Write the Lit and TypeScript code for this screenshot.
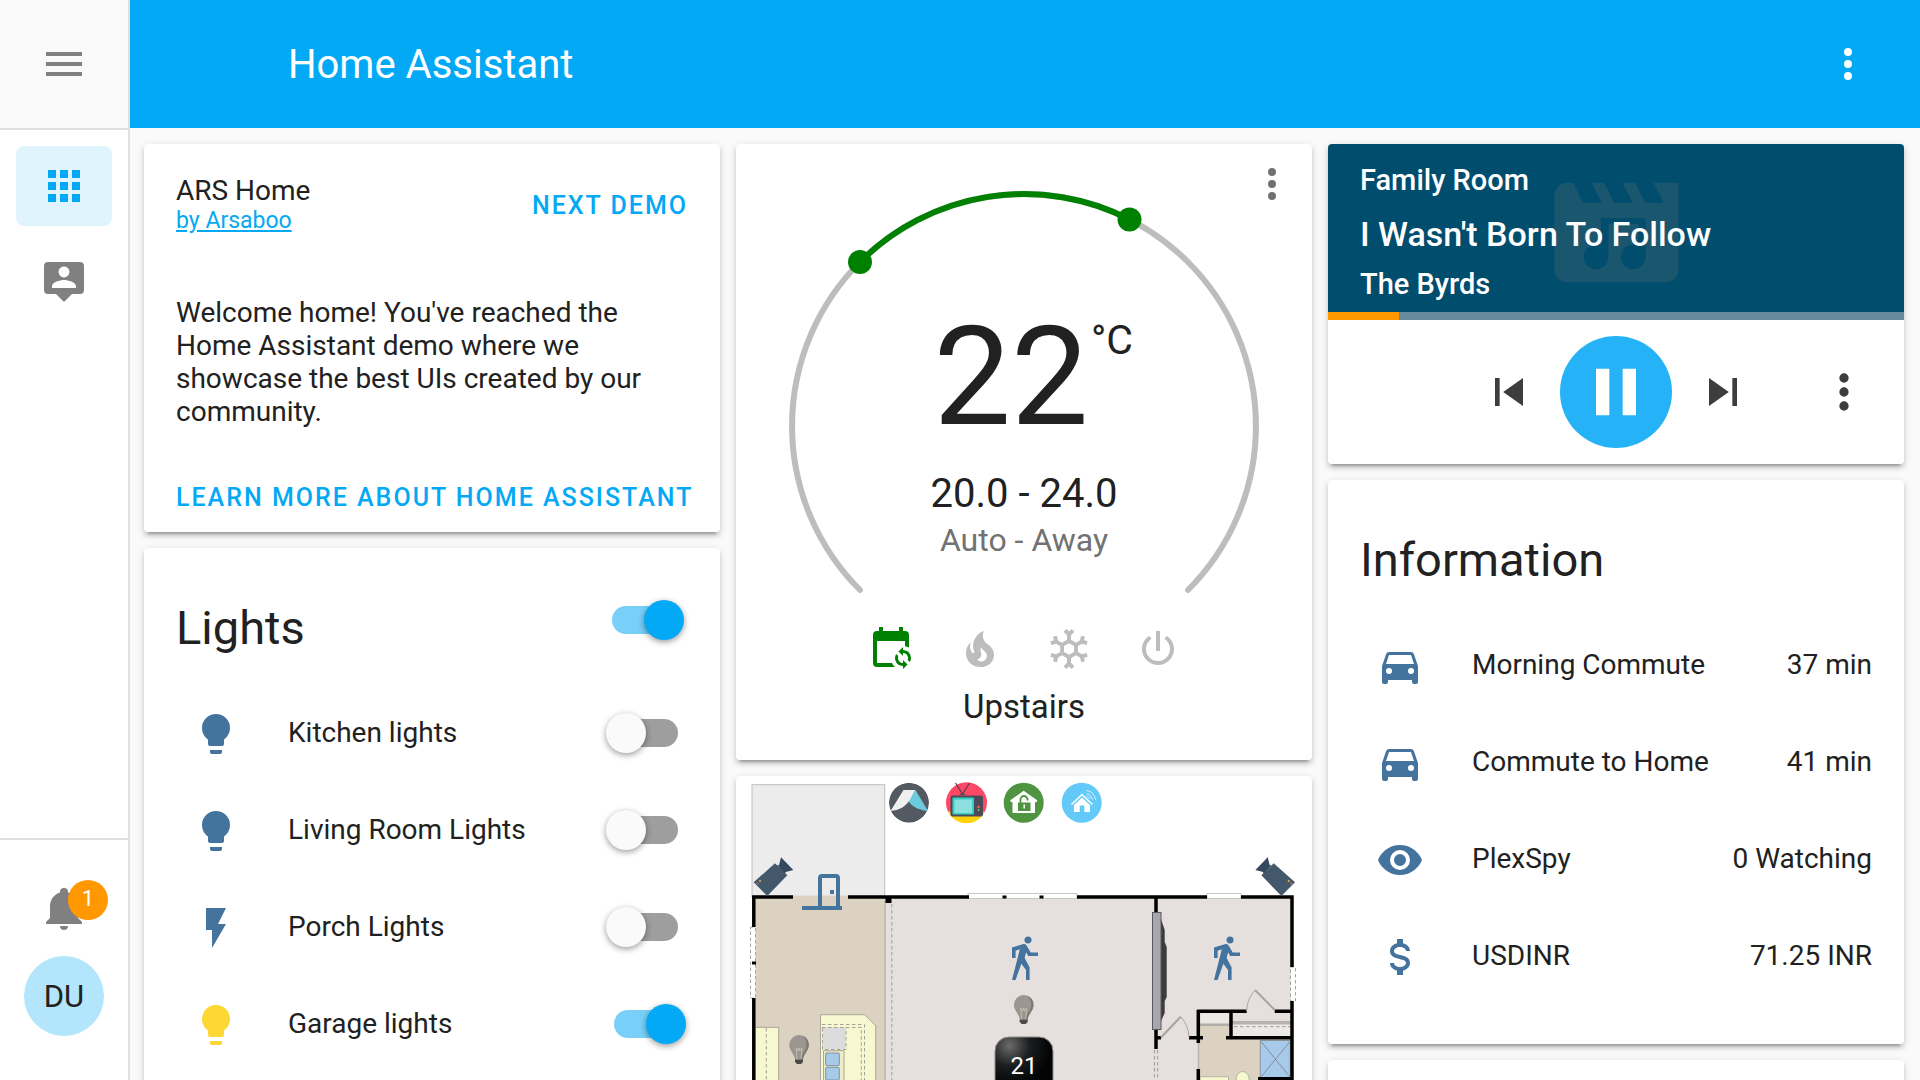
import { LitElement, html, css, svg } from "lit";
import { customElement, property } from "lit/decorators.js";

const ICONS: Record<string, string> = {
  menu: "M3,6H21V8H3V6M3,11H21V13H3V11M3,16H21V18H3V16Z",
  apps: "M16,20H20V16H16M16,14H20V10H16M10,8H14V4H10M16,8H20V4H16M10,14H14V10H10M4,14H8V10H4M4,20H8V16H4M10,20H14V16H10M4,8H8V4H4V8Z",
  account:
    "M20,2H4A2,2 0 0,0 2,4V16A2,2 0 0,0 4,18H8L12,22L16,18H20A2,2 0 0,0 22,16V4A2,2 0 0,0 20,2M12,4.3C13.5,4.3 14.7,5.5 14.7,7C14.7,8.5 13.5,9.7 12,9.7C10.5,9.7 9.3,8.5 9.3,7C9.3,5.5 10.5,4.3 12,4.3M18,15H6V14.1C6,12.1 10,11 12,11C14,11 18,12.1 18,14.1V15Z",
  bell: "M21,19V20H3V19L5,17V11C5,7.9 7.03,5.17 10,4.29C10,4.19 10,4.1 10,4A2,2 0 0,1 12,2A2,2 0 0,1 14,4C14,4.1 14,4.19 14,4.29C16.97,5.17 19,7.9 19,11V17L21,19M14,21A2,2 0 0,1 12,23A2,2 0 0,1 10,21",
  dots: "M12,16A2,2 0 0,1 14,18A2,2 0 0,1 12,20A2,2 0 0,1 10,18A2,2 0 0,1 12,16M12,10A2,2 0 0,1 14,12A2,2 0 0,1 12,14A2,2 0 0,1 10,12A2,2 0 0,1 12,10M12,4A2,2 0 0,1 14,6A2,2 0 0,1 12,8A2,2 0 0,1 10,6A2,2 0 0,1 12,4Z",
  bulb: "M12,2A7,7 0 0,0 5,9C5,11.38 6.19,13.47 8,14.74V17A1,1 0 0,0 9,18H15A1,1 0 0,0 16,17V14.74C17.81,13.47 19,11.38 19,9A7,7 0 0,0 12,2M9,21A1,1 0 0,0 10,22H14A1,1 0 0,0 15,21V20H9V21Z",
  flash: "M7,2V13H10V22L17,10H13L17,2H7Z",
  car: "M5,11L6.5,6.5H17.5L19,11M17.5,16A1.5,1.5 0 0,1 16,14.5A1.5,1.5 0 0,1 17.5,13A1.5,1.5 0 0,1 19,14.5A1.5,1.5 0 0,1 17.5,16M6.5,16A1.5,1.5 0 0,1 5,14.5A1.5,1.5 0 0,1 6.5,13A1.5,1.5 0 0,1 8,14.5A1.5,1.5 0 0,1 6.5,16M18.92,6C18.72,5.42 18.16,5 17.5,5H6.5C5.84,5 5.28,5.42 5.08,6L3,12V20A1,1 0 0,0 4,21H5A1,1 0 0,0 6,20V19H18V20A1,1 0 0,0 19,21H20A1,1 0 0,0 21,20V12L18.92,6Z",
  eye: "M12,9A3,3 0 0,0 9,12A3,3 0 0,0 12,15A3,3 0 0,0 15,12A3,3 0 0,0 12,9M12,17A5,5 0 0,1 7,12A5,5 0 0,1 12,7A5,5 0 0,1 17,12A5,5 0 0,1 12,17M12,4.5C7,4.5 2.73,7.61 1,12C2.73,16.39 7,19.5 12,19.5C17,19.5 21.27,16.39 23,12C21.27,7.61 17,4.5 12,4.5Z",
  dollar:
    "M7,15H9C9,16.08 10.37,17 12,17C13.63,17 15,16.08 15,15C15,13.9 13.96,13.5 11.76,12.97C9.64,12.44 7,11.78 7,9C7,7.21 8.47,5.69 10.5,5.18V3H13.5V5.18C15.53,5.69 17,7.21 17,9H15C15,7.92 13.63,7 12,7C10.37,7 9,7.92 9,9C9,10.1 10.04,10.5 12.24,11.03C14.36,11.56 17,12.22 17,15C17,16.79 15.53,18.31 13.5,18.82V21H10.5V18.82C8.47,18.31 7,16.79 7,15Z",
  calendarSync:
    "M19,3H18V1H16V3H8V1H6V3H5A2,2 0 0,0 3,5V19A2,2 0 0,0 5,21H14C13.36,20.45 12.86,19.77 12.5,19H5V8H19V10.59C19.71,10.7 20.39,10.94 21,11.31V5A2,2 0 0,0 19,3M18,11V12.5C20.21,12.5 22,14.29 22,16.5C22,17.25 21.79,17.95 21.42,18.54L20.33,17.45C20.44,17.16 20.5,16.84 20.5,16.5C20.5,15.12 19.38,14 18,14V15.5L15.75,13.25L18,11M18,22V20.5C15.79,20.5 14,18.71 14,16.5C14,15.75 14.21,15.05 14.58,14.46L15.67,15.55C15.56,15.84 15.5,16.16 15.5,16.5C15.5,17.88 16.62,19 18,19V17.5L20.25,19.75L18,22Z",
  fire: "M17.66 11.2C17.43 10.9 17.15 10.64 16.89 10.38C16.22 9.78 15.46 9.35 14.82 8.72C13.33 7.26 13 4.85 13.95 3C13 3.23 12.17 3.75 11.46 4.32C8.87 6.4 7.85 10.07 9.07 13.22C9.11 13.32 9.15 13.42 9.15 13.55C9.15 13.77 9 13.97 8.8 14.05C8.57 14.15 8.33 14.09 8.14 13.93C8.08 13.88 8.04 13.83 8 13.76C6.87 12.33 6.69 10.28 7.45 8.64C5.78 10 4.87 12.3 5 14.47C5.06 14.97 5.12 15.47 5.29 15.97C5.43 16.57 5.7 17.17 6 17.7C7.08 19.43 8.95 20.67 10.96 20.92C13.1 21.19 15.39 20.8 17.03 19.32C18.86 17.66 19.5 15 18.56 12.72L18.43 12.46C18.22 12 17.66 11.2 17.66 11.2M14.5 17.5C14.22 17.74 13.76 18 13.4 18.1C12.28 18.5 11.16 17.94 10.5 17.28C11.69 17 12.4 16.12 12.61 15.23C12.78 14.43 12.46 13.77 12.33 13C12.21 12.26 12.23 11.63 12.5 10.94C12.69 11.32 12.89 11.7 13.13 12C13.9 13 15.11 13.44 15.37 14.8C15.41 14.94 15.43 15.08 15.43 15.23C15.46 16.05 15.1 16.95 14.5 17.5Z",
  snowflake:
    "M20.79,13.95L18.46,14.57L16.46,13.44V10.56L18.46,9.43L20.79,10.05L21.31,8.12L19.54,7.65L20,5.88L18.07,5.36L17.45,7.69L15.45,8.82L13,7.38V5.12L14.71,3.41L13.29,2L12,3.29L10.71,2L9.29,3.41L11,5.12V7.38L8.5,8.82L6.5,7.69L5.92,5.36L4,5.88L4.47,7.65L2.7,8.12L3.22,10.05L5.55,9.43L7.55,10.56V13.45L5.55,14.58L3.22,13.96L2.7,15.89L4.47,16.36L4,18.12L5.93,18.64L6.55,16.31L8.55,15.18L11,16.62V18.88L9.29,20.59L10.71,22L12,20.71L13.29,22L14.7,20.59L13,18.88V16.62L15.5,15.17L17.5,16.3L18.12,18.63L20,18.12L19.53,16.35L21.3,15.88L20.79,13.95M9.5,10.56L12,9.11L14.5,10.56V13.44L12,14.89L9.5,13.44V10.56Z",
  power:
    "M16.56,5.44L15.11,6.89C16.84,7.94 18,9.83 18,12A6,6 0 0,1 12,18A6,6 0 0,1 6,12C6,9.83 7.16,7.94 8.88,6.88L7.44,5.44C5.36,6.88 4,9.28 4,12A8,8 0 0,0 12,20A8,8 0 0,0 20,12C20,9.28 18.64,6.88 16.56,5.44M13,3H11V13H13",
  previous: "M6,18V6H8V18H6M9.5,12L18,6V18L9.5,12Z",
  next: "M16,18H18V6H16M6,18L14.5,12L6,6V18Z",
  pause: "M14,19H18V5H14M6,19H10V5H6V19Z",
  musicVideo:
    "M18,4L19.6,7.2H16.6L15,4H13L14.6,7.2H11.6L10,4H8L9.6,7.2H6.6L5,4H4A2,2 0 0,0 2,6V18A2,2 0 0,0 4,20H20A2,2 0 0,0 22,18V4H18M9.5,9.7H16.7V16A2,2 0 1,1 15.5,14.1V10.6H10.7V16A2,2 0 1,1 9.5,14.1V9.7Z",
};

const WALK =
  "M14.12,10H19V8.2H15.38L13.38,4.87C13.08,4.37 12.54,4.03 11.92,4.03C11.74,4.03 11.58,4.06 11.42,4.11L6,5.8V11H7.8V7.33L9.91,6.67L6,22H7.8L10.67,13.89L13,17V22H14.8V15.59L12.31,11.05L13.04,8.18M14,3.8C15,3.8 15.8,3 15.8,2A1.8,1.8 0 0,0 14,0.2C13,0.2 12.2,1 12.2,2C12.2,3 13,3.8 14,3.8Z";

const base = css`
  * {
    box-sizing: border-box;
  }
  :host {
    font-family: Roboto, "Noto Sans", sans-serif;
    color: #212121;
  }
  h1,
  h2,
  p {
    margin: 0;
    font-weight: 400;
  }
  button {
    border: 0;
    padding: 0;
    background: none;
    font: inherit;
    color: inherit;
    cursor: pointer;
    display: flex;
    align-items: center;
    justify-content: center;
  }
`;

const card = css`
  :host {
    display: block;
    position: relative;
    background: #fff;
    border-radius: 4px;
    box-shadow:
      0 4px 4px 0 rgba(0, 0, 0, 0.14),
      0 2px 10px 0 rgba(0, 0, 0, 0.12),
      0 6px 2px -4px rgba(0, 0, 0, 0.2);
  }
`;

@customElement("ha-icon")
class HaIcon extends LitElement {
  static styles = css`
    :host {
      display: inline-flex;
      flex: none;
      width: 48px;
      height: 48px;
    }
    svg {
      width: 100%;
      height: 100%;
      fill: currentColor;
    }
  `;
  @property() name = "";
  render() {
    return html`<svg viewBox="0 0 24 24" aria-hidden="true">
      <path fill-rule=${this.name === "musicVideo" ? "evenodd" : "nonzero"} d=${ICONS[this.name]}></path>
    </svg>`;
  }
}

@customElement("demo-card")
class DemoCard extends LitElement {
  static styles = [
    base,
    card,
    css`
      .body {
        padding: 24px 32px 0;
      }
      .head {
        display: flex;
        align-items: center;
        justify-content: space-between;
      }
      h2 {
        font-size: 28px;
        line-height: 33px;
      }
      .author {
        display: block;
        font-size: 23px;
        line-height: 28px;
        color: #03a9f4;
      }
      .intro {
        margin: 56px 0 32px;
        font-size: 28px;
        line-height: 33px;
      }
      .action {
        height: 72px;
        padding-top: 2px;
        font-size: 25px;
        font-weight: 500;
        letter-spacing: 2px;
        text-transform: uppercase;
        white-space: nowrap;
        color: #03a9f4;
      }
      a.action {
        display: flex;
        align-items: center;
        text-decoration: none;
      }
    `,
  ];
  render() {
    return html`<div class="body">
      <div class="head">
        <div>
          <h2>ARS Home</h2>
          <a class="author" href="#author">by Arsaboo</a>
        </div>
        <button class="action">Next demo</button>
      </div>
      <p class="intro">
        Welcome home! You've reached the Home Assistant demo where we showcase the best UIs created by our community.
      </p>
      <a class="action" href="#learn">Learn more about Home Assistant</a>
    </div>`;
  }
}

const entityStyles = css`
  .head {
    display: flex;
    justify-content: space-between;
    padding: 32px 36px 18px 32px;
  }
  h2 {
    font-size: 47px;
    line-height: 96px;
  }
  .rows {
    display: grid;
    gap: 16px;
    padding: 0 32px 46px;
  }
  .row {
    display: flex;
    align-items: center;
    min-height: 81px;
    padding-bottom: 1px;
    font-size: 28px;
    line-height: 33px;
  }
  .state-icon {
    width: 80px;
    display: flex;
    justify-content: center;
    color: #44739e;
  }
  .state-icon.on {
    color: #fdd835;
  }
  .label {
    flex: 1;
    padding: 0 16px 3px 32px;
  }
  .value {
    padding-bottom: 3px;
  }
`;

@customElement("lights-card")
class LightsCard extends LitElement {
  static styles = [
    base,
    card,
    entityStyles,
    css`
      .rows {
        padding-right: 34px;
      }
      .switch {
        appearance: none;
        position: relative;
        width: 80px;
        height: 40px;
        margin: 0 0 2px;
        flex: none;
        cursor: pointer;
      }
      .switch::before {
        content: "";
        position: absolute;
        inset: 6px 8px;
        border-radius: 14px;
        background: #9e9e9e;
      }
      .switch::after {
        content: "";
        position: absolute;
        left: 0;
        top: 0;
        width: 40px;
        height: 40px;
        border-radius: 50%;
        background: #fafafa;
        box-shadow: 0 2px 6px rgba(0, 0, 0, 0.4);
      }
      .switch:checked::before {
        background: #78d0f9;
      }
      .switch:checked::after {
        left: 40px;
        background: #03a9f4;
      }
      .head .switch {
        margin-top: 20px;
      }
    `,
  ];
  private lights = [
    { name: "Kitchen lights", icon: "bulb", on: false },
    { name: "Living Room Lights", icon: "bulb", on: false },
    { name: "Porch Lights", icon: "flash", on: false },
    { name: "Garage lights", icon: "bulb", on: true },
  ];
  render() {
    return html`<div class="head">
        <h2>Lights</h2>
        <input class="switch" type="checkbox" role="switch" aria-label="All lights" checked />
      </div>
      <div class="rows">
        ${this.lights.map(
          (l, i) => html`<div class="row">
            <span class="state-icon ${l.on ? "on" : ""}"><ha-icon name=${l.icon}></ha-icon></span>
            <label class="label" for="light-${i}">${l.name}</label>
            <input class="switch" id="light-${i}" type="checkbox" role="switch" ?checked=${l.on} />
          </div>`,
        )}
      </div>`;
  }
}

@customElement("info-card")
class InfoCard extends LitElement {
  static styles = [base, card, entityStyles];
  private rows = [
    ["car", "Morning Commute", "37 min"],
    ["car", "Commute to Home", "41 min"],
    ["eye", "PlexSpy", "0 Watching"],
    ["dollar", "USDINR", "71.25 INR"],
  ];
  render() {
    return html`<div class="head"><h2>Information</h2></div>
      <div class="rows">
        ${this.rows.map(
          ([icon, name, value]) => html`<div class="row">
            <span class="state-icon"><ha-icon name=${icon}></ha-icon></span>
            <span class="label">${name}</span>
            <span class="value">${value}</span>
          </div>`,
        )}
      </div>`;
  }
}

@customElement("thermostat-card")
class ThermostatCard extends LitElement {
  static styles = [
    base,
    card,
    css`
      .dial {
        display: block;
        width: 100%;
      }
      .dial text {
        fill: #212121;
        text-anchor: middle;
      }
      .dial .temp {
        font-size: 138px;
      }
      .dial .unit {
        font-size: 41px;
        text-anchor: start;
      }
      .dial .range {
        font-size: 40px;
      }
      .dial .mode {
        font-size: 32px;
        fill: #727272;
      }
      .modes {
        display: flex;
        justify-content: center;
        gap: 41px;
        color: #bdbdbd;
      }
      .modes .active {
        color: #008000;
      }
      h2 {
        font-size: 33px;
        line-height: 40px;
        text-align: center;
        padding: 14px 0 33px;
        box-sizing: content-box;
      }
      .more {
        position: absolute;
        top: 0;
        right: 0;
        width: 80px;
        height: 80px;
        color: #727272;
      }
    `,
  ];
  render() {
    return html`<svg class="dial" viewBox="0 0 576 481" role="img" aria-label="Upstairs thermostat">
        <g fill="none" stroke-width="6" stroke-linecap="round">
          <path stroke="#bdbdbd" d="M124 446A232 232 0 1 1 452 446"></path>
          <path stroke="#008000" d="M124 118A232 232 0 0 1 393.5 75.4"></path>
        </g>
        <circle cx="124" cy="118" r="12" fill="#008000"></circle>
        <circle cx="393.5" cy="75.4" r="12" fill="#008000"></circle>
        <text class="temp" x="275" y="280">22</text>
        <text class="unit" x="355" y="210">°C</text>
        <text class="range" x="288" y="363">20.0 - 24.0</text>
        <text class="mode" x="288" y="407">Auto - Away</text>
      </svg>
      <div class="modes">
        <button class="active" aria-label="Auto"><ha-icon name="calendarSync"></ha-icon></button>
        <button aria-label="Heat"><ha-icon name="fire"></ha-icon></button>
        <button aria-label="Cool"><ha-icon name="snowflake"></ha-icon></button>
        <button aria-label="Off"><ha-icon name="power"></ha-icon></button>
      </div>
      <h2>Upstairs</h2>
      <button class="more" aria-label="More info"><ha-icon name="dots"></ha-icon></button>`;
  }
}

@customElement("media-card")
class MediaCard extends LitElement {
  static styles = [
    base,
    card,
    css`
      .banner {
        position: relative;
        padding: 16px 32px 12px;
        border-radius: 4px 4px 0 0;
        background: #014d6e;
        color: #fff;
        font-size: 29px;
        font-weight: 500;
      }
      .art {
        position: absolute;
        left: 50%;
        top: 14px;
        width: 149px;
        height: 149px;
        margin-left: -74px;
        color: #1b566f;
      }
      .line {
        position: relative;
        line-height: 40px;
        font-weight: 500;
      }
      .title {
        font-size: 34px;
        line-height: 68px;
      }
      .artist {
        line-height: 32px;
      }
      .progress {
        height: 8px;
        background: #668a9a;
      }
      .played {
        height: 100%;
        background: #ff9800;
      }
      .controls {
        display: grid;
        grid-template-columns: 1fr auto 1fr;
        align-items: center;
        height: 144px;
        padding: 0 32px;
        color: #3d3d3d;
      }
      .transport {
        grid-column: 2;
        display: flex;
        align-items: center;
        gap: 23px;
      }
      .transport ha-icon,
      .more ha-icon {
        width: 56px;
        height: 56px;
      }
      .transport .pause {
        width: 112px;
        height: 112px;
        border-radius: 50%;
        background: #26b2f6;
        color: #fff;
      }
      .transport .pause ha-icon {
        width: 80px;
        height: 80px;
      }
      .more {
        justify-self: end;
      }
    `,
  ];
  private played = 12.3;
  render() {
    return html`<div class="banner">
        <ha-icon class="art" name="musicVideo"></ha-icon>
        <p class="line">Family Room</p>
        <p class="line title">I Wasn't Born To Follow</p>
        <p class="line artist">The Byrds</p>
      </div>
      <div class="progress"><div class="played" style="width:${this.played}%"></div></div>
      <div class="controls">
        <div class="transport">
          <button aria-label="Previous track"><ha-icon name="previous"></ha-icon></button>
          <button class="pause" aria-label="Pause"><ha-icon name="pause"></ha-icon></button>
          <button aria-label="Next track"><ha-icon name="next"></ha-icon></button>
        </div>
        <button class="more" aria-label="More info"><ha-icon name="dots"></ha-icon></button>
      </div>`;
  }
}

const camera = svg`
  <path fill="#34495e" d="M41 89L43 89.3L45 81.3L57.3 94L49.7 96L49 98Z"></path>
  <path fill="#43586b" d="M39 87.3L51.3 99.3L31.3 120L17.7 106.3Z"></path>
  <circle cx="21.500" cy="107.600" r="1" fill="#f0634c"></circle>
  <circle cx="24" cy="105" r="1" fill="#f3b13c"></circle>`;

const lamp = (x: number, y: number) => svg`<g transform="translate(${x} ${y})">
  <path fill="#9b968f" d="M0 0A10 10 0 0 1 9.8 10C9.8 15.500 4.500 19 4 24.500H-4C-4.500 19-9.800 15.500-9.800 10A10 10 0 0 1 0 0Z"></path>
  <path fill="#7d7872" d="M3 .5A10 10 0 0 1 9.800 10C9.800 15.500 4.500 19 4 24.500H2C3 18 7.500 15 7.500 10C7.500 6 6 2.500 3 .5Z"></path>
  <path fill="none" stroke="#c9c4bd" stroke-width=".8" d="M-2 24L-3 13L-1 16L0 13L1 16L3 13L2 24"></path>
  <path fill="#4b4a49" d="M-4 24.500H4V27L2 29H-2L-4 27Z"></path>
</g>`;

@customElement("floorplan-card")
class FloorplanCard extends LitElement {
  static styles = [
    base,
    card,
    css`
      .plan {
        display: block;
        width: 100%;
      }
      .reading {
        font-size: 24px;
        fill: #fff;
        text-anchor: middle;
      }
    `,
  ];
  render() {
    return html`<svg class="plan" viewBox="0 0 576 420" role="img" aria-label="Floor plan">
      <defs>
        <radialGradient id="tile" cx=".25" cy=".15" r=".7">
          <stop offset="0" stop-color="#6c6c6c"></stop>
          <stop offset=".5" stop-color="#1c1d1e"></stop>
          <stop offset="1" stop-color="#030405"></stop>
        </radialGradient>
        <clipPath id="tent"><circle cx="173" cy="26.700" r="20"></circle></clipPath>
        <clipPath id="tv"><circle cx="230.500" cy="26.700" r="20.500"></circle></clipPath>
      </defs>

      <!-- floors -->
      <rect x="16" y="8.700" width="132.700" height="112" fill="#ececec" stroke="#bdbdbd"></rect>
      <rect x="17" y="119.500" width="132" height="301" fill="#dbd2c1"></rect>
      <rect x="149" y="121" width="407" height="299" fill="#e5e0dd"></rect>
      <rect x="463" y="248" width="31" height="172" fill="#dbd2c1"></rect>
      <rect x="463" y="263" width="92" height="157" fill="#dbd2c1"></rect>
      <rect x="464" y="237" width="29.500" height="11" fill="#ebe8e4"></rect>
      <rect x="464" y="247.500" width="29.500" height="2.500" fill="#b0aca8"></rect>
      <rect x="496" y="248" width="59" height="13" fill="#eceae7"></rect>
      <rect x="496" y="245" width="59" height="3.500" fill="#b8b3b0"></rect>

      <!-- kitchen -->
      <path fill="#f7f7d0" stroke="#a9a797" d="M19.700 251.300H42.700V420H19.700M84.500 420V238.700H128.700L139.700 249.700V420"></path>
      <rect x="86.300" y="251.300" width="23.500" height="22" fill="#dcdcdc"></rect>
      <g fill="none" stroke="#a3a294" stroke-dasharray="3.500 2.500">
        <path d="M30.300 252V420M86 248.500H128.500V420M86 251.500H125.300V420M86.500 252V273.500H110V252"></path>
      </g>
      <path fill="#eeeecb" stroke="#a9a797" d="M87.500 420V274.700H108V420"></path>
      <g fill="#a8caea" stroke="#7d8fa0">
        <rect x="89.700" y="277" width="13.600" height="12.700" rx="1"></rect>
        <rect x="89.700" y="291.300" width="13.600" height="12.700" rx="1"></rect>
      </g>

      <!-- bathroom -->
      <rect x="524.300" y="264.500" width="30" height="37" fill="#a8caea" stroke="#8c9499"></rect>
      <path fill="none" stroke="#75808a" stroke-width=".8" d="M525 265.500L554 301M554 265.500L525 301"></path>
      <rect x="464" y="300.700" width="28.500" height="30" fill="#f7f7d0" stroke="#b8b5a4"></rect>
      <ellipse cx="506.700" cy="303" rx="6.500" ry="7.500" fill="#f7f7d0" stroke="#b8b5a4"></ellipse>

      <!-- partitions, windows and doors -->
      <path fill="none" stroke="#b9b4b0" stroke-width="1.500" d="M149 124V420M462.500 267V293"></path>
      <g fill="none" stroke="#a19c98" stroke-dasharray="3.500 2.500">
        <path d="M155.800 128V420M418.500 274V420M421.700 274V420M498 250.700H555"></path>
      </g>
      <g fill="#fff" stroke="#c9c7c5">
        <rect x="232" y="117.500" width="109" height="5"></rect>
        <rect x="471" y="117.500" width="34" height="5"></rect>
      </g>
      <g fill="#fff" stroke="#a8a6a4" stroke-dasharray="3.500 2.500">
        <rect x="14.500" y="151" width="5" height="71"></rect>
        <rect x="554.500" y="191" width="5" height="34"></rect>
      </g>
      <path fill="none" stroke="#000" stroke-width="3.500" d="M16 121H57M112 121H233M341 121H471M505 121H557.700M17.800 121V151M17.800 222V420M556 121V191M556 225V420M420 121V137M420 253V273M421 261.700H425M453 261.700H467M462.300 234V267M462.300 293V420M461 235.300H510.700M538.700 235.300H556M495 235V262M490 261.700H556M522 302.700H556"></path>
      <path fill="#000" d="M149.500 121h6v6h-6zM266.500 119.500h4v3h-4zM303.500 119.500h4v3h-4zM16 185.500h4v3h-4z"></path>
      <g fill="none" stroke="#aaa6a2">
        <path stroke-width="2.200" d="M425 261.500L444.700 240.700M538.700 234L519 214"></path>
        <path d="M444.700 240.700Q452.500 249 453 261.500M519 214Q510.500 224 510.700 235"></path>
      </g>
      <path fill="#3d3b3e" d="M424.700 142L428.700 154V166L430.700 171V221L428.700 225V237L424.700 246Z"></path>
      <rect x="416.500" y="136.500" width="8.500" height="117" fill="#a7a6ac" stroke="#5a595d"></rect>

      <!-- shortcuts -->
      <g clip-path="url(#tent)">
        <circle cx="173" cy="26.700" r="20" fill="#545a61"></circle>
        <path fill="#6ccbdd" d="M177 14H179.500L192 35C181 34 174 29 172 24Z"></path>
        <path fill="#f0f0f0" d="M167.500 14H179C175 20 173 33.500 154.500 35Z"></path>
      </g>
      <g clip-path="url(#tv)">
        <rect x="209" y="6" width="43" height="30" fill="#ff4766"></rect>
        <rect x="209" y="35.500" width="43" height="12" fill="#ffd20a"></rect>
      </g>
      <path fill="none" stroke="#4f4350" stroke-width="1.200" d="M219.500 7L226.500 18L233.500 7"></path>
      <path fill="#4c4a58" d="M223.500 19Q226.500 15 229.500 19ZM216.500 19.500H245Q247 19.500 247 21.500V38.500Q247 40.500 245 40.500H216.500Q214.500 40.500 214.500 38.500V21.500Q214.500 19.500 216.500 19.500Z"></path>
      <rect x="216.500" y="21.500" width="21.500" height="17" rx="1" fill="#35cfc5"></rect>
      <rect x="218.500" y="23.500" width="17.500" height="13.500" fill="#8be0df"></rect>
      <circle cx="242.500" cy="31" r="1.300" fill="#ff5a3c"></circle>
      <circle cx="242.500" cy="34" r="1.100" fill="#65c466"></circle>
      <circle cx="287.700" cy="26.700" r="20" fill="#4f9440"></circle>
      <path fill="#fff" d="M287.700 14.700L301.500 24.500L300 26.500L299 26V37H276.500V26L275.500 26.500L274 24.500Z"></path>
      <path fill="none" stroke="#4f9440" stroke-width="1.800" d="M284.500 27V23.500A3.500 3.500 0 0 1 291.500 23.500V24.500"></path>
      <rect x="282" y="26.500" width="12.500" height="8.500" fill="#4f9440"></rect>
      <path stroke="#fff" stroke-width="1.500" d="M288.200 28.500V32.500"></path>
      <circle cx="345.700" cy="26.700" r="20" fill="#62c9f8"></circle>
      <path fill="none" stroke="#fff" stroke-width="1.600" d="M335.500 28.500L346 18.500L356.500 28.500"></path>
      <path fill="#fff" d="M346 21.500L354 29V36H348.300V29.500H343.700V36H338V29Z"></path>
      <g fill="none" stroke="#d5f0fd" stroke-width="1">
        <path d="M350.500 14.500Q358.500 15.500 359.500 24M350.500 17.500Q355.500 18.500 356.500 23.500M350.500 20Q353 20.500 354 23"></path>
      </g>

      <!-- devices -->
      ${camera}
      <g transform="translate(576.700 0) scale(-1 1)">${camera}</g>
      <g fill="#44739e">
        <path fill-rule="evenodd" d="M66 130H82V102A4 4 0 0 1 86 98H100A4 4 0 0 1 104 102V130H106V134H66ZM86 102V130H100V102ZM94 114H98V118H94Z"></path>
        <path transform="translate(264 160) scale(2)" d=${WALK}></path>
        <path transform="translate(466 160) scale(2)" d=${WALK}></path>
      </g>
      ${lamp(287.7, 219)} ${lamp(63, 259)}
      <rect x="259" y="261" width="58" height="58" rx="14" fill="url(#tile)" stroke="#8d8a88" stroke-width="1"></rect>
      <text class="reading" x="288" y="298">21</text>
    </svg>`;
  }
}

@customElement("blank-card")
class BlankCard extends LitElement {
  static styles = [
    card,
    css`
      :host {
        min-height: 200px;
      }
    `,
  ];
  render() {
    return html``;
  }
}

@customElement("app-root")
class AppRoot extends LitElement {
  static styles = [
    base,
    css`
      :host {
        display: grid;
        grid-template-columns: 130px 1fr;
        height: 100vh;
        overflow: hidden;
        background: #fafafa;
      }
      .sidebar {
        display: flex;
        flex-direction: column;
        background: #fff;
        border-right: 2px solid #e0e0e0;
        color: #808080;
        min-height: 0;
      }
      .menu {
        height: 130px;
        background: #fafafa;
        border-bottom: 2px solid #e0e0e0;
      }
      .nav {
        flex: 1;
        display: flex;
        flex-direction: column;
        gap: 16px;
        padding: 16px;
      }
      .nav a {
        display: flex;
        align-items: center;
        justify-content: center;
        height: 80px;
        border-radius: 8px;
        color: inherit;
      }
      .nav a.selected {
        color: #03a9f4;
        background: #e0f4fd;
      }
      .bottom {
        display: flex;
        flex-direction: column;
        align-items: center;
        gap: 8px;
        padding: 28px 0 44px;
        border-top: 2px solid #e0e0e0;
      }
      .notifications {
        position: relative;
        width: 96px;
        height: 80px;
      }
      .badge {
        position: absolute;
        top: 12px;
        right: 4px;
        width: 40px;
        height: 40px;
        border-radius: 50%;
        background: #ff9800;
        color: #fff;
        font-size: 22px;
        line-height: 38px;
        text-align: center;
      }
      .avatar {
        width: 80px;
        height: 80px;
        border-radius: 50%;
        background: #b3e5fc;
        color: #212121;
        font-size: 31px;
      }
      .page {
        min-width: 0;
        min-height: 0;
        display: flex;
        flex-direction: column;
      }
      .toolbar {
        flex: none;
        display: flex;
        align-items: center;
        justify-content: space-between;
        height: 128px;
        padding: 0 48px 0 158px;
        background: #03a9f4;
        color: #fff;
      }
      .toolbar h1 {
        padding-top: 2px;
        font-size: 40px;
        line-height: 48px;
      }
      .view {
        display: grid;
        grid-template-columns: repeat(3, minmax(0, 1fr));
        gap: 16px;
        padding: 16px 16px 0 14px;
        min-height: 0;
      }
      .column {
        display: flex;
        flex-direction: column;
        gap: 16px;
      }
    `,
  ];
  render() {
    return html`<aside class="sidebar">
        <button class="menu" aria-label="Menu"><ha-icon name="menu"></ha-icon></button>
        <nav class="nav">
          <a class="selected" href="#overview" aria-label="Overview"><ha-icon name="apps"></ha-icon></a>
          <a href="#map" aria-label="Map"><ha-icon name="account"></ha-icon></a>
        </nav>
        <div class="bottom">
          <button class="notifications" aria-label="Notifications">
            <ha-icon name="bell"></ha-icon><span class="badge">1</span>
          </button>
          <button class="avatar">DU</button>
        </div>
      </aside>
      <div class="page">
        <header class="toolbar">
          <h1>Home Assistant</h1>
          <button aria-label="Options"><ha-icon name="dots"></ha-icon></button>
        </header>
        <main class="view">
          <div class="column"><demo-card></demo-card><lights-card></lights-card></div>
          <div class="column"><thermostat-card></thermostat-card><floorplan-card></floorplan-card></div>
          <div class="column"><media-card></media-card><info-card></info-card><blank-card></blank-card></div>
        </main>
      </div>`;
  }
}
